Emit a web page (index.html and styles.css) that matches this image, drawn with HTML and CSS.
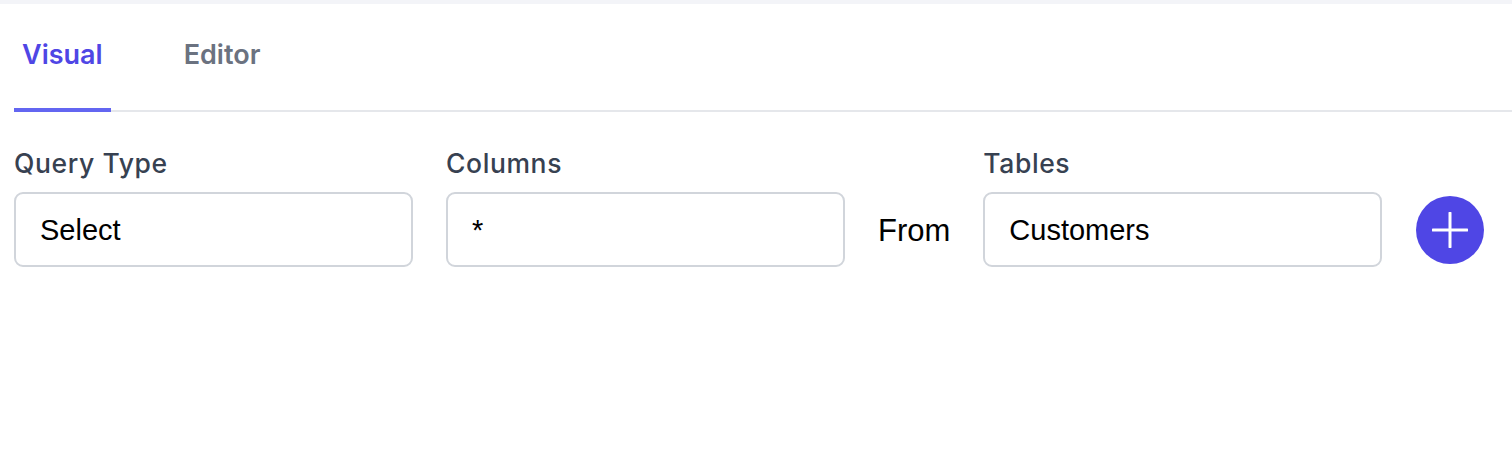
FILE: index.html
```html
<!DOCTYPE html>
<html lang="en">
<head>
<meta charset="utf-8">
<title>Query Builder</title>
<link rel="stylesheet" href="styles.css">
</head>
<body>
<div class="topbar"></div>
<div class="page">
  <nav class="tabs">
    <a class="tab active">Visual</a>
    <a class="tab">Editor</a>
  </nav>
  <div class="query-row">
    <div class="field">
      <label class="label">Query Type</label>
      <div class="input">Select</div>
    </div>
    <div class="field">
      <label class="label">Columns</label>
      <div class="input">*</div>
    </div>
    <div class="from">From</div>
    <div class="field">
      <label class="label">Tables</label>
      <div class="input">Customers</div>
    </div>
    <button class="add-btn" aria-label="Add">
      <svg width="36" height="36" viewBox="0 0 36 36"><path d="M18 1v34M1 18h34" stroke="#fff" stroke-width="3" stroke-linecap="round" fill="none"/></svg>
    </button>
  </div>
</div>
</body>
</html>
```
FILE: styles.css
```css
* { box-sizing: border-box; }
html, body { margin: 0; padding: 0; background: #fff; }
body { font-family: Inter, "Noto Sans", sans-serif; }
.topbar { height: 4px; background: #f3f4f8; }
.page { padding: 0 0 0 14px; }
.tabs {
  display: flex;
  gap: 65px;
  border-bottom: 2px solid #e5e7eb;
}
.tab {
  padding: 35px 8px 38px;
  margin-bottom: -2px;
  border-bottom: 4px solid transparent;
  font-size: 27px;
  font-weight: 600;
  line-height: 31px;
  color: #6b7280;
}
.tab.active { color: #4f46e5; border-bottom-color: #6366f1; }
.query-row {
  display: flex;
  align-items: flex-end;
  gap: 33px;
  margin-top: 37px;
}
.field { display: flex; flex-direction: column; gap: 14px; }
.label {
  font-size: 26.5px;
  font-weight: 500;
  line-height: 29px;
  letter-spacing: 0.6px;
  color: #374151;
}
.input {
  width: 399px;
  height: 75px;
  border: 2px solid #d1d5db;
  border-radius: 9px;
  padding: 2px 24px 0;
  display: flex;
  align-items: center;
  font-family: "Liberation Sans", Arial, sans-serif;
  font-size: 29px;
  color: #000;
}
.from {
  height: 75px;
  padding-top: 2px;
  display: flex;
  align-items: center;
  font-family: "Liberation Sans", Arial, sans-serif;
  font-size: 31px;
  color: #000;
}
.add-btn {
  width: 68px;
  height: 68px;
  border-radius: 50%;
  border: none;
  background: #4f46e5;
  display: flex;
  align-items: center;
  justify-content: center;
  padding: 0;
  margin-bottom: 3px;
  margin-left: 1px;
}
```
